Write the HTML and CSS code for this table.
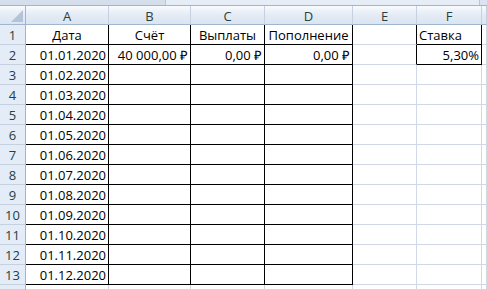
FILE: index.html
```html
<!DOCTYPE html>
<html>
<head>
<meta charset="utf-8">
<link rel="stylesheet" href="styles.css">
</head>
<body>
<div class="topbar"><div class="tb-left"></div><div class="tb-right"></div><div class="tb-end"></div></div>
<div class="sheet">
  <div class="hc corner"><span class="tri"></span></div>
  <div class="hc">A</div><div class="hc">B</div><div class="hc">C</div><div class="hc">D</div><div class="hc">E</div><div class="hc">F</div><div class="hc last"></div>

  <div class="rh">1</div>
  <div class="c b center">Дата</div><div class="c b center">Счёт</div><div class="c b center">Выплаты</div><div class="c b center">Пополнение</div><div class="c br"></div><div class="c b left">Ставка</div><div class="c"></div>

  <div class="rh">2</div>
  <div class="c b">01.01.2020</div><div class="c b">40 000,00 ₽</div><div class="c b">0,00 ₽</div><div class="c b">0,00 ₽</div><div class="c br"></div><div class="c b">5,30%</div><div class="c"></div>

  <div class="rh">3</div><div class="c b">01.02.2020</div><div class="c b"></div><div class="c b"></div><div class="c b"></div><div class="c"></div><div class="c"></div><div class="c"></div>
  <div class="rh">4</div><div class="c b">01.03.2020</div><div class="c b"></div><div class="c b"></div><div class="c b"></div><div class="c"></div><div class="c"></div><div class="c"></div>
  <div class="rh">5</div><div class="c b">01.04.2020</div><div class="c b"></div><div class="c b"></div><div class="c b"></div><div class="c"></div><div class="c"></div><div class="c"></div>
  <div class="rh">6</div><div class="c b">01.05.2020</div><div class="c b"></div><div class="c b"></div><div class="c b"></div><div class="c"></div><div class="c"></div><div class="c"></div>
  <div class="rh">7</div><div class="c b">01.06.2020</div><div class="c b"></div><div class="c b"></div><div class="c b"></div><div class="c"></div><div class="c"></div><div class="c"></div>
  <div class="rh">8</div><div class="c b">01.07.2020</div><div class="c b"></div><div class="c b"></div><div class="c b"></div><div class="c"></div><div class="c"></div><div class="c"></div>
  <div class="rh">9</div><div class="c b">01.08.2020</div><div class="c b"></div><div class="c b"></div><div class="c b"></div><div class="c"></div><div class="c"></div><div class="c"></div>
  <div class="rh">10</div><div class="c b">01.09.2020</div><div class="c b"></div><div class="c b"></div><div class="c b"></div><div class="c"></div><div class="c"></div><div class="c"></div>
  <div class="rh">11</div><div class="c b">01.10.2020</div><div class="c b"></div><div class="c b"></div><div class="c b"></div><div class="c"></div><div class="c"></div><div class="c"></div>
  <div class="rh">12</div><div class="c b">01.11.2020</div><div class="c b"></div><div class="c b"></div><div class="c b"></div><div class="c"></div><div class="c"></div><div class="c"></div>
  <div class="rh">13</div><div class="c b">01.12.2020</div><div class="c b"></div><div class="c b"></div><div class="c b"></div><div class="c"></div><div class="c"></div><div class="c"></div>
  <div class="rh"></div><div class="c"></div><div class="c"></div><div class="c"></div><div class="c"></div><div class="c"></div><div class="c"></div><div class="c"></div>
</div>
</body>
</html>
```

FILE: styles.css
```css
* { box-sizing: border-box; margin: 0; padding: 0; }
html, body { width: 487px; height: 290px; overflow: hidden; background: #fff; }
body { font-family: "Open Sans", "Liberation Sans", sans-serif; font-size: 13px; color: #000; }

.topbar { height: 6px; display: flex; border-bottom: 1px solid #9eb6ce; background: #dbe5f1; }
.tb-left { width: 165px; background: #d5dfec; }
.tb-right { width: 315px; background: #e6edf6; border-left: 1px solid #b6c7da; border-right: 1px solid #b6c7da; }
.tb-end { flex: 1; background: #dbe5f1; }

.sheet {
  display: grid;
  grid-template-columns: 26px 83px 82px 74px 88px 64px 65px 1fr;
  grid-template-rows: 19px repeat(13, 20px) 5px;
  overflow: hidden;
}

.hc {
  background: linear-gradient(#f9fbfd, #e4ebf5 50%, #dbe4f0);
  border-right: 1px solid #c5d1e0;
  border-bottom: 1px solid #9eb6ce;
  color: #27413e;
  display: flex; align-items: center; justify-content: center;
  padding-top: 1px;
  font-size: 13px;
}
.corner { position: relative; border-right: 1px solid #9eb6ce; }
.tri {
  position: absolute; right: 2px; bottom: 2px;
  width: 0; height: 0;
  border-left: 12px solid transparent;
  border-bottom: 12px solid #b4c4d8;
}

.rh {
  background: #e4ecf7;
  border-right: 1px solid #9eb6ce;
  border-bottom: 1px solid #c5d1e0;
  color: #27413e;
  display: flex; align-items: flex-end; justify-content: center;
  padding-bottom: 0;
  font-size: 13px;
}

.c {
  border-right: 1px solid #d0d7e5;
  border-bottom: 1px solid #d0d7e5;
  display: flex; align-items: flex-end; justify-content: flex-end;
  padding: 0 2px 0 2px;
  white-space: nowrap;
  line-height: 18px;
}
.c.b { border-right-color: #000; border-bottom-color: #000; }
.c.br { border-right-color: #000; }
.center { justify-content: center !important; }
.left { justify-content: flex-start !important; }
```
